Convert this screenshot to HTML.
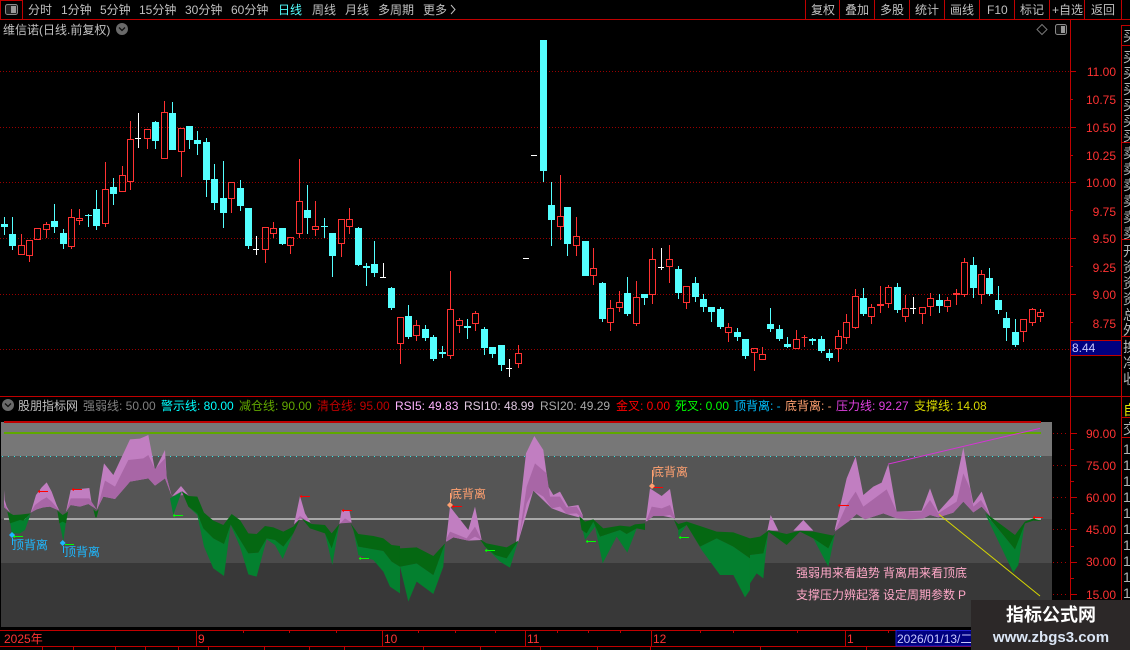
<!DOCTYPE html>
<html><head><meta charset="utf-8"><style>
html,body{margin:0;padding:0;background:#000;width:1130px;height:650px;overflow:hidden}
svg{display:block;font-family:"Liberation Sans","WenQuanYi Zen Hei","Noto Sans CJK SC",sans-serif;font-size:12px}
</style></head><body>
<svg width="1130" height="650" viewBox="0 0 1130 650" xmlns="http://www.w3.org/2000/svg">
<defs><clipPath id="rc"><rect x="1122" y="20" width="8" height="630"/></clipPath></defs>
<rect width="1130" height="650" fill="#000"/>
<!-- dotted grid -->
<g stroke="#990000" stroke-dasharray="1 2" shape-rendering="crispEdges" fill="none">
<path d="M0 71.5H1070M0 127.5H1070M0 182.5H1070M0 238.5H1070M0 294.5H1070M0 349.5H1070"/>
</g>
<!-- candles -->
<path shape-rendering="crispEdges" fill="#54ffff" d="M4 217h1V235h-1zM1 224h7V227h-7zM12 217h1V250h-1zM9 234h7V246h-7zM54 204h1V233h-1zM51 221h7V227h-7zM63 229h1V249h-1zM60 233h7V244h-7zM88 214h1V227h-1zM85 215h7V216h-7zM96 190h1V230h-1zM93 209h7V226h-7zM113 178h1V205h-1zM110 187h7V194h-7zM155 121h1V149h-1zM152 122h7V141h-7zM172 102h1V150h-1zM169 113h7V150h-7zM189 126h1V149h-1zM186 126h7V140h-7zM197 131h1V155h-1zM194 140h7V144h-7zM206 138h1V197h-1zM203 142h7V180h-7zM214 164h1V210h-1zM211 179h7V203h-7zM223 161h1V228h-1zM220 198h7V213h-7zM240 180h1V211h-1zM237 188h7V206h-7zM248 208h1V249h-1zM245 208h7V246h-7zM282 228h1V245h-1zM279 228h7V244h-7zM307 185h1V234h-1zM304 210h7V218h-7zM324 218h1V238h-1zM321 226h7V227h-7zM332 233h1V277h-1zM329 233h7V256h-7zM358 227h1V266h-1zM355 228h7V265h-7zM366 263h1V286h-1zM363 266h7V268h-7zM374 241h1V277h-1zM371 264h7V273h-7zM391 287h1V310h-1zM388 288h7V308h-7zM408 305h1V339h-1zM405 316h7V337h-7zM425 325h1V341h-1zM422 329h7V338h-7zM433 335h1V361h-1zM430 337h7V359h-7zM442 346h1V358h-1zM439 352h7V354h-7zM467 319h1V339h-1zM464 326h7V328h-7zM484 327h1V355h-1zM481 329h7V348h-7zM492 347h1V358h-1zM489 347h7V354h-7zM501 345h1V371h-1zM498 345h7V365h-7zM543 40h1V182h-1zM540 40h7V171h-7zM551 182h1V246h-1zM548 205h7V220h-7zM567 207h1V256h-1zM564 207h7V244h-7zM585 241h1V276h-1zM582 241h7V276h-7zM602 282h1V322h-1zM599 283h7V319h-7zM627 277h1V316h-1zM624 293h7V314h-7zM644 294h1V305h-1zM641 294h7V298h-7zM678 266h1V299h-1zM675 269h7V293h-7zM695 277h1V302h-1zM692 283h7V297h-7zM703 294h1V312h-1zM700 299h7V307h-7zM711 307h1V322h-1zM708 307h7V312h-7zM720 307h1V329h-1zM717 309h7V327h-7zM737 328h1V341h-1zM734 332h7V337h-7zM745 339h1V359h-1zM742 339h7V356h-7zM770 308h1V332h-1zM767 324h7V329h-7zM779 325h1V341h-1zM776 329h7V339h-7zM787 337h1V348h-1zM784 344h7V347h-7zM812 338h1V345h-1zM809 339h7V341h-7zM821 336h1V353h-1zM818 339h7V351h-7zM829 349h1V361h-1zM826 353h7V358h-7zM863 288h1V316h-1zM860 298h7V314h-7zM897 283h1V313h-1zM894 287h7V310h-7zM939 294h1V313h-1zM936 300h7V306h-7zM973 257h1V298h-1zM970 265h7V288h-7zM989 268h1V296h-1zM986 278h7V294h-7zM998 286h1V314h-1zM995 300h7V310h-7zM1006 312h1V341h-1zM1003 318h7V328h-7zM1015 319h1V347h-1zM1012 332h7V345h-7z"/>
<path shape-rendering="crispEdges" fill="none" stroke="#ff3232" d="M21.5 234V245M21.5 255V255M18.5 245.5h6V254.5h-6zM29.5 256V262M26.5 240.5h6V255.5h-6zM34.5 228.5h6V239.5h-6zM46.5 222V224M46.5 230V238M43.5 224.5h6V229.5h-6zM71.5 209V217M71.5 247V249M68.5 217.5h6V246.5h-6zM79.5 209V218M79.5 221V225M76.5 218.5h6V220.5h-6zM105.5 162V189M105.5 224V227M102.5 189.5h6V223.5h-6zM122.5 166V175M119.5 175.5h6V191.5h-6zM130.5 121V139M130.5 182V190M127.5 139.5h6V181.5h-6zM147.5 139V149M144.5 129.5h6V138.5h-6zM164.5 101V112M161.5 112.5h6V158.5h-6zM181.5 152V177M178.5 128.5h6V151.5h-6zM228.5 182.5h6V198.5h-6zM231.5 199V213M265.5 250V263M262.5 227.5h6V249.5h-6zM273.5 222V228M273.5 234V238M270.5 228.5h6V233.5h-6zM290.5 246V254M287.5 237.5h6V245.5h-6zM299.5 159V201M299.5 234V238M296.5 201.5h6V233.5h-6zM315.5 201V226M315.5 230V236M312.5 226.5h6V229.5h-6zM341.5 244V257M338.5 219.5h6V243.5h-6zM349.5 208V219M349.5 227V234M346.5 219.5h6V226.5h-6zM400.5 344V364M397.5 317.5h6V343.5h-6zM416.5 320V325M416.5 336V341M413.5 325.5h6V335.5h-6zM450.5 271V309M450.5 356V359M447.5 309.5h6V355.5h-6zM459.5 318V320M459.5 326V333M456.5 320.5h6V325.5h-6zM475.5 311V313M475.5 324V331M472.5 313.5h6V323.5h-6zM518.5 345V353M518.5 364V368M515.5 353.5h6V363.5h-6zM560.5 175V216M560.5 227V240M557.5 216.5h6V226.5h-6zM576.5 217V236M576.5 246V256M573.5 236.5h6V245.5h-6zM593.5 248V268M593.5 276V285M590.5 268.5h6V275.5h-6zM610.5 300V308M610.5 323V331M607.5 308.5h6V322.5h-6zM619.5 291V302M619.5 308V312M616.5 302.5h6V307.5h-6zM636.5 281V297M636.5 324V326M633.5 297.5h6V323.5h-6zM652.5 248V259M652.5 295V304M649.5 259.5h6V294.5h-6zM669.5 245V259M669.5 267V283M666.5 259.5h6V266.5h-6zM686.5 303V309M683.5 286.5h6V302.5h-6zM728.5 323V327M728.5 333V342M725.5 327.5h6V332.5h-6zM754.5 353V371M751.5 348.5h6V352.5h-6zM762.5 347V354M759.5 354.5h6V359.5h-6zM796.5 330V339M793.5 339.5h6V348.5h-6zM804.5 335V347M801.5 337.5h6V337.5h-6zM838.5 330V336M838.5 349V362M835.5 336.5h6V348.5h-6zM846.5 314V322M846.5 338V344M843.5 322.5h6V337.5h-6zM855.5 289V296M855.5 328V329M852.5 296.5h6V327.5h-6zM871.5 304V307M871.5 317V324M868.5 307.5h6V316.5h-6zM880.5 286V304M880.5 306V313M877.5 304.5h6V305.5h-6zM888.5 285V287M888.5 304V308M885.5 287.5h6V303.5h-6zM905.5 295V308M905.5 317V322M902.5 308.5h6V316.5h-6zM922.5 314V324M919.5 307.5h6V313.5h-6zM930.5 293V298M930.5 307V316M927.5 298.5h6V306.5h-6zM947.5 297V300M947.5 307V312M944.5 300.5h6V306.5h-6zM956.5 289V293M956.5 295V305M953.5 293.5h6V294.5h-6zM964.5 258V262M964.5 295V297M961.5 262.5h6V294.5h-6zM981.5 270V274M981.5 295V304M978.5 274.5h6V294.5h-6zM1023.5 332V342M1020.5 319.5h6V331.5h-6zM1032.5 308V309M1032.5 323V326M1029.5 309.5h6V322.5h-6zM1040.5 309V312M1040.5 317V322M1037.5 312.5h6V316.5h-6z"/>
<path shape-rendering="crispEdges" fill="#fff" d="M138 113h1V148h-1zM135 138h6v1h-6zM256 236h1V255h-1zM253 249h6v1h-6zM383 263h1V277h-1zM380 277h6v1h-6zM509 359h1V377h-1zM506 368h6v1h-6zM523 258h6v1h-6zM531 155h6v1h-6zM661 248h1V270h-1zM658 267h6v1h-6zM913 297h1V314h-1zM910 308h6v1h-6z"/>
<!-- indicator bands -->
<g shape-rendering="crispEdges">
<rect x="1" y="422" width="1051" height="34" fill="#777"/>
<rect x="1" y="456" width="1051" height="63" fill="#555"/>
<rect x="1" y="519" width="1051" height="44" fill="#4b4b4b"/>
<rect x="1" y="563" width="1051" height="64" fill="#383838"/>
<rect x="4" y="432" width="1037" height="2" fill="#5fa800"/>
<rect x="4" y="518" width="1037" height="2" fill="#a8a8a8"/>
<rect x="4" y="421" width="1037" height="2" fill="#c00000"/>
<path d="M2 456.5H1042" stroke="#2ee6e6" stroke-dasharray="1 5" fill="none"/>
</g>
<!-- ribbons: zoom 5 coords -->
<g transform="translate(0,390) scale(.33333)">
<g fill="#c17ec1"><path d="M12 300L14 330 20 350 30 367 12 350z"/><path d="M92 368L108 315 125 292 140 277 155 305 170 345 178 362 150 350 130 352 110 358z"/><path d="M198 365L212 300 268 294 275 340 290 358 265 342 240 350 212 345z"/><path d="M290 360L300 290 312 220 340 255 390 148 420 146 445 135 465 240 495 180 500 262 515 318 495 265 465 287 445 265 390 275 345 327 310 320z"/><path d="M515 320L543 288 565 315 543 305z"/><path d="M882 403L900 318 915 370 932 398 900 385z"/><path d="M1018 402L1025 360 1048 360 1055 398 1035 392z"/></g>
<g fill="#a866a6"><path d="M12 340L20 355 30 367 12 352z"/><path d="M92 368L105 345 125 330 140 322 155 335 178 362 150 350 130 352 110 358z"/><path d="M198 365L212 325 268 325 290 358 265 342 240 350 212 345z"/><path d="M292 355L315 272 345 290 385 210 430 205 445 195 465 237 495 205 500 262 515 318 495 265 465 287 445 265 390 275 345 327 310 320z"/><path d="M520 318L543 305 555 315z"/><path d="M890 390L900 378 925 395 900 385z"/><path d="M1020 400L1035 385 1055 398z"/></g>
<g fill="#04802f"><path d="M30 395L35 430 60 430 75 420 92 372 70 392 60 390z"/><path d="M178 395L190 455 198 395z"/><path d="M510 325L520 375 545 305z"/><path d="M545 305L565 350 592 370 610 415 640 445 672 462 692 403 745 490 775 488 800 445 825 450 850 470 880 430 900 390 880 430 848 507 825 465 800 448 770 560 745 553 720 470 692 405 672 558 640 535 612 470 592 375 565 350z"/><path d="M975 430L997 525 1018 402 995 472z"/><path d="M1060 420L1075 470 1150 483 1175 515 1200 530 1200 610 1170 590 1150 545 1120 510 1075 495z"/></g>
<g fill="#056812"><path d="M22 365L40 375 60 374 92 370 70 392 60 390 30 400z"/><path d="M172 362L188 375 204 365 198 400 188 395 178 400z"/><path d="M280 358L288 365 296 358 290 382 286 382z"/><path d="M545 303L565 318 592 320 612 368 640 392 670 405 695 372 720 390 745 430 770 432 795 408 820 412 850 425 880 410 900 388 880 430 850 470 825 450 800 445 775 488 745 490 692 403 672 462 640 445 610 415 592 370 565 350z"/><path d="M905 385L935 402 975 405 995 430 1018 402 995 475 975 430 930 415z"/><path d="M1052 400L1075 432 1120 438 1150 445 1175 465 1200 468 1200 530 1175 515 1150 483 1075 470 1060 420z"/></g>
</g>
<!-- zoom 6 coords -->
<g transform="translate(400,390) scale(.33333)">
<g fill="#c17ec1"><path d="M138 455L150 350 205 420 225 350 245 450 205 452 160 442z"/><path d="M348 458L378 190 403 138 430 180 445 290 460 315 480 305 505 350 535 345 548 375 548 385 500 372 455 355 400 302 355 455z"/><path d="M737 395L750 295 785 318 810 297 825 385 790 378 760 378z"/></g>
<g fill="#a866a6"><path d="M140 445L150 425 200 445 225 410 245 450 225 440 205 452 160 442 140 455z"/><path d="M355 455L380 290 405 220 440 250 450 320 480 320 500 352 530 350 548 378 548 385 530 370 500 372 480 350 455 355 430 320 400 302 380 340z"/><path d="M740 390L755 350 785 355 810 345 825 385 825 388 810 375 790 378 760 378 740 395z"/></g>
<g fill="#04802f"><path d="M0 530L25 635 50 575 100 612 130 530 135 460 100 555 50 520z"/><path d="M250 465L285 495 320 505 355 452 330 533 300 515z"/><path d="M540 385L555 450 585 410 608 520 650 440 682 488 710 415 735 420 710 415 680 432 660 420 600 440 580 395 560 430 545 420z"/><path d="M835 420L860 405 900 470 950 445 1000 470 1050 505 1050 600 1035 622 1000 555 960 555 905 480 860 405 835 440z"/></g>
<g fill="#056812"><path d="M0 475L50 472 100 498 135 460 100 555 50 520 0 530z"/><path d="M240 448L260 460 320 472 355 452 320 505 285 495 255 470z"/><path d="M538 378L555 395 580 388 610 415 660 407 690 410 705 403 735 400 735 420 710 415 680 432 660 420 600 440 580 395 560 430 545 420z"/><path d="M822 390L835 402 860 395 900 408 950 425 1000 427 1050 445 1050 505 1000 470 950 445 900 470 860 405 835 420z"/></g>
</g>
<!-- zoom 7 coords -->
<g transform="translate(750,390) scale(.33333)">
<g fill="#c17ec1"><path d="M52 422L62 375 85 422z"/><path d="M130 422L160 390 190 422z"/><path d="M254 420L290 265 317 200 340 315 370 290 395 278 415 222 440 365 515 362 540 295 565 365 610 315 640 172 660 290 670 340 695 305 720 375 720 378 695 350 670 367 640 335 610 368 565 382 540 375 520 385 480 388 440 385 400 370 345 388 320 372 295 395z"/></g>
<g fill="#a866a6"><path d="M254 425L290 345 317 305 340 350 410 298 440 365 515 365 540 330 565 370 620 335 640 250 660 295 670 350 693 330 720 375 720 378 695 350 670 367 640 335 610 368 565 382 540 375 520 385 480 388 440 385 400 370 345 388 320 372 295 395z"/></g>
<g fill="#04802f"><path d="M0 495L40 490 55 425 45 510 40 565 20 550 0 580z"/><path d="M190 445L235 475 255 430 235 530z"/><path d="M705 370L795 478 825 395 805 525 790 548z"/></g>
<g fill="#056812"><path d="M0 445L30 440 55 422 55 425 40 490 0 495z"/><path d="M55 420L110 432 150 422 190 425 250 437 255 430 235 475 190 445 150 425 110 465 55 425z"/><path d="M705 368L795 435 825 395 850 385 875 393 850 392 825 400 795 478z"/></g>
<path d="M415 222L870 115" stroke="#d633d6" stroke-width="3" fill="none"/>
<path d="M567 373L870 618" stroke="#d8d800" stroke-width="3" fill="none"/>
</g>
<!-- arrows -->
<g fill="none" stroke="#ff0000" stroke-width="1" shape-rendering="crispEdges">
<path d="M38 491.5H48M38 491.5l2-1M38 491.5l2 1M72 489.5H82M72 489.5l2-1M72 489.5l2 1M300 496.5H310M300 496.5l2-1M300 496.5l2 1M342 510.5H352M342 510.5l2-1M342 510.5l2 1M452 506.5H462M452 506.5l2-1M452 506.5l2 1M653 487.5H663M838 505.5H849M838 505.5l2-1M838 505.5l2 1M1033 517.5H1043M1033 517.5l2-1M1033 517.5l2 1"/>
</g>
<g fill="none" stroke="#00ff00" stroke-width="1" shape-rendering="crispEdges">
<path d="M13 536.5H23M13 536.5l2-1M13 536.5l2 1M65 544.5H74M173 515.5H183M173 515.5l2-1M173 515.5l2 1M359 558.5H369M359 558.5l2-1M359 558.5l2 1M485 550.5H495M485 550.5l2-1M485 550.5l2 1M586 541.5H596M586 541.5l2-1M586 541.5l2 1M679 537.5H689M679 537.5l2-1M679 537.5l2 1"/>
</g>
<!-- divergence markers -->
<path d="M12 532l3 3-3 3-3-3z" fill="#1eb8ff"/><path d="M62.700 540l3 3-3 3-3-3z" fill="#1eb8ff"/>
<path d="M450 502l3 3-3 3-3-3z" fill="#ffa070"/><path d="M652 483l3 3-3 3-3-3z" fill="#ffa070"/>
<path d="M12.500 538V545M63.500 546V553" stroke="#1eb8ff" fill="none"/>
<path d="M450.500 493V502M652.500 470V483" stroke="#ffa070" fill="none"/>
<text x="12" y="549" fill="#1eb8ff">顶背离</text>
<text x="64" y="556" fill="#1eb8ff">顶背离</text>
<text x="450" y="498" fill="#ffa070">底背离</text>
<text x="652" y="476" fill="#ffa070">底背离</text>
<text x="796" y="577" fill="#ffa8c8">强弱用来看趋势</text><text x="883" y="577" fill="#ffa8c8">背离用来看顶底</text>
<text x="796" y="599" fill="#ffa8c8">支撑压力辨起落</text><text x="883" y="599" fill="#ffa8c8">设定周期参数</text><text x="958" y="599" fill="#ffa8c8">P</text>
<!-- frame lines -->
<g stroke="#c00000" fill="none" shape-rendering="crispEdges">
<path d="M0 19.500H1130M22.500 0V19M805.500 0V19M839.500 0V19M874.500 0V19M909.500 0V19M944.500 0V19M979.500 0V19M1014.500 0V19M1049.500 0V19M1084.500 0V19M1121.500 0V19"/>
<path d="M0 .5H22M.5 0V19"/>
<path d="M1070.500 20V630M1121.500 25V650M1122 25.500H1130M1122 45.500H1130M1122 142.500H1130M1122 239.500H1130M1122 336.500H1130M1122 396.500H1130M1122 417.500H1130M1122 437.500H1130"/>
<path d="M0 396.500H1122M0 630.500H1122M0 646.500H1122"/>
<path d="M1070 71.500h6M1070 99.500h3M1070 127.500h6M1070 155.500h3M1070 182.500h6M1070 210.500h3M1070 238.500h6M1070 266.500h3M1070 294.500h6M1070 322.500h3"/>
<path d="M1071 433.500h6M1071 449.500h3M1071 465.500h6M1071 481.500h3M1071 497.500h6M1071 513.500h3M1071 529.500h6M1071 546.500h3M1071 562.500h6M1071 578.500h3M1071 594.500h6M1071 610.500h3"/>
<path d="M196.500 630V646M382.500 630V646M525.500 630V646M651.500 630V646M845.500 630V646M243.500 630v3M289.500 630v3M336.500 630v3M418.500 630v3M455.500 630v3M495.500 630v3M557.500 630v3M588.500 630v3M620.500 630v3M700.500 630v3M733.500 630v3M797.500 630v3M888.500 630v3"/>
<path d="M42.500 647V650M73.500 647V650M115.500 647V650M145.500 647V650M178.500 647V650M208.500 647V650M264.500 647V650M309.500 647V650M344.500 647V650M423.500 647V650M480.500 647V650M540.500 647V650M597.500 647V650M650.500 647V650M760.500 647V650M866.500 647V650"/>
</g>
<g stroke="#a80000" stroke-dasharray="1 3" fill="none" shape-rendering="crispEdges">
<path d="M1053 433.500H1068M1053 465.500H1068M1053 497.500H1068M1053 529.500H1068M1053 562.500H1068M1053 594.500H1068"/>
</g>
<!-- top bar -->
<rect x="5.500" y="4.500" width="12" height="10" rx="2" fill="#222" stroke="#8a8a8a"/><rect x="11" y="6" width="5" height="7" fill="#9a9a9a"/>
<g fill="#c0c0c0">
<text x="28" y="14">分时</text><text x="61" y="14">1分钟</text><text x="100" y="14">5分钟</text><text x="139" y="14">15分钟</text><text x="185" y="14">30分钟</text><text x="231" y="14">60分钟</text><text x="278" y="14" fill="#54ffff">日线</text><text x="312" y="14">周线</text><text x="345" y="14">月线</text><text x="378" y="14">多周期</text><text x="423" y="14">更多</text>
<text x="811" y="14">复权</text><text x="845" y="14">叠加</text><text x="880" y="14">多股</text><text x="915" y="14">统计</text><text x="950" y="14">画线</text><text x="987" y="14">F10</text><text x="1020" y="14">标记</text><text x="1052" y="14">+自选</text><text x="1091" y="14">返回</text>
<text x="3" y="34">维信诺(日线.前复权)</text>
</g>
<path d="M451 5l4 4.500-4 4.500" fill="none" stroke="#c0c0c0"/>
<circle cx="122" cy="29" r="6" fill="#6a6a6a"/><path d="M119 27.500l3 3 3-3" fill="none" stroke="#111" stroke-width="1.300"/>
<path d="M1042 24.500l5 5-5 5-5-5z" fill="none" stroke="#777"/>
<rect x="1055.500" y="24.500" width="11" height="10" rx="2" fill="#111" stroke="#8a8a8a"/><rect x="1061" y="26" width="4" height="7" fill="#9a9a9a"/>
<!-- axis labels -->
<g fill="#ff3232" text-anchor="end">
<text x="1116" y="76">11.00</text><text x="1116" y="104">10.75</text><text x="1116" y="132">10.50</text><text x="1116" y="160">10.25</text><text x="1116" y="187">10.00</text><text x="1116" y="216">9.75</text><text x="1116" y="243">9.50</text><text x="1116" y="272">9.25</text><text x="1116" y="299">9.00</text><text x="1116" y="328">8.75</text>
<text x="1116" y="438">90.00</text><text x="1116" y="470">75.00</text><text x="1116" y="502">60.00</text><text x="1116" y="534">45.00</text><text x="1116" y="566">30.00</text><text x="1116" y="599">15.00</text>
</g>
<rect x="1070.500" y="340.500" width="51" height="15" fill="#000080" stroke="#c00000" shape-rendering="crispEdges"/>
<text x="1072" y="352" fill="#c8c8ff">8.44</text>
<!-- legend -->
<circle cx="8" cy="405" r="6" fill="#6a6a6a"/><path d="M5 403.500l3 3 3-3" fill="none" stroke="#111" stroke-width="1.300"/>
<text x="18" y="410" fill="#c0c0c0">股朋指标网</text>
<text x="83" y="410" fill="#808080">强弱线: 50.00</text>
<text x="161" y="410" fill="#00ffff">警示线: 80.00</text>
<text x="239" y="410" fill="#62a800">减仓线: 90.00</text>
<text x="317" y="410" fill="#c00000">清仓线: 95.00</text>
<text x="395" y="410" fill="#ffb4ff">RSI5: 49.83</text>
<text x="464" y="410" fill="#e0c8e0">RSI10: 48.99</text>
<text x="540" y="410" fill="#a8a8a8">RSI20: 49.29</text>
<text x="616" y="410" fill="#ff0000">金叉: 0.00</text>
<text x="675" y="410" fill="#00ff00">死叉: 0.00</text>
<text x="734" y="410" fill="#00c0ff">顶背离: -</text>
<text x="785" y="410" fill="#ffa070">底背离: -</text>
<text x="836" y="410" fill="#e040e0">压力线: 92.27</text>
<text x="914" y="410" fill="#d8d800">支撑线: 14.08</text>
<!-- time axis -->
<g fill="#ff3232">
<text x="4" y="643">2025年</text><text x="198" y="643">9</text><text x="384" y="643">10</text><text x="527" y="643">11</text><text x="653" y="643">12</text><text x="847" y="643">1</text>
</g>
<rect x="896" y="630.500" width="76" height="15.500" fill="#000080" stroke="#2020d0" shape-rendering="crispEdges"/>
<text x="897" y="643" fill="#c8c8ff">2026/01/13/二</text>
<!-- right clipped column -->
<g clip-path="url(#rc)" fill="#b4b4b4" font-size="14">
<text x="1123" y="41">买</text>
<text x="1123" y="62">买</text><text x="1123" y="78">买</text><text x="1123" y="94">买</text><text x="1123" y="110">买</text><text x="1123" y="126">买</text><text x="1123" y="141">买</text>
<text x="1123" y="158">卖</text><text x="1123" y="174">卖</text><text x="1123" y="190">卖</text><text x="1123" y="206">卖</text><text x="1123" y="222">卖</text><text x="1123" y="238">卖</text>
<text x="1123" y="256">开</text><text x="1123" y="272">资</text><text x="1123" y="288">资</text><text x="1123" y="304">资</text><text x="1123" y="320">总</text><text x="1123" y="335">外</text>
<text x="1123" y="352">换</text><text x="1123" y="368">净</text><text x="1123" y="384">收</text>
<text x="1123" y="415" fill="#e0e000">自</text>
<text x="1123" y="434">交</text>
<text x="1123" y="454">1</text><text x="1123" y="470">1</text><text x="1123" y="486">1</text><text x="1123" y="502">1</text><text x="1123" y="518">1</text><text x="1123" y="534">1</text><text x="1123" y="550">1</text><text x="1123" y="566">1</text><text x="1123" y="582">1</text><text x="1123" y="598">1</text>
</g>
<!-- watermark -->
<rect x="971" y="600" width="159" height="50" fill="#2c2828"/>
<text x="1051" y="621" text-anchor="middle" fill="#ffffff" font-size="18" font-weight="bold">指标公式网</text>
<text x="1051" y="642" text-anchor="middle" fill="#dbe6f5" font-size="15" font-weight="bold">www.zbgs3.com</text>
</svg>
</body></html>
